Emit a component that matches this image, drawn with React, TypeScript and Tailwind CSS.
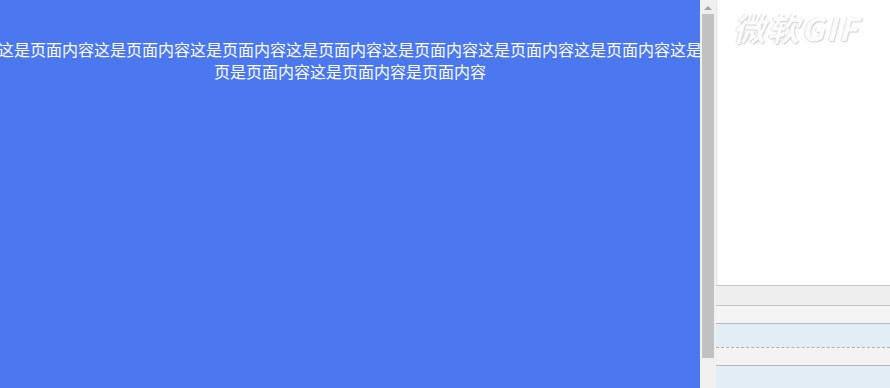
const line1 = "这是页面内容".repeat(7) + "这是";
const line2 = "页是页面内容这是页面内容是页面内容";

export default function App() {
  return (
    <div className="flex h-[388px] w-[890px] overflow-hidden bg-white font-['Noto_Sans_CJK_SC',sans-serif]">
      {/* page */}
      <div className="w-[700px] shrink-0 overflow-hidden bg-[#4b78ef] pt-[38px] text-center text-[16px] leading-[22px] text-white">
        <div className="-mx-[4px] whitespace-nowrap">{line1}</div>
        <div className="whitespace-nowrap">{line2}</div>
      </div>

      {/* scrollbar */}
      <div className="flex w-[16px] shrink-0 flex-col bg-[#f0f0f0]">
        <div className="flex h-[14px] items-center justify-center">
          <svg width="8" height="5" viewBox="0 0 8 5">
            <path d="M0 5 L4 1 L8 5 Z" fill="#a3a3a3" />
          </svg>
        </div>
        <div className="mx-[2px] h-[344px] bg-[#c1c1c1]" />
      </div>

      {/* side panel */}
      <div className="flex flex-1 flex-col shadow-[inset_3px_0_3px_-2px_rgba(0,0,0,0.12)]">
        <div className="h-[285px] pl-[17px] pt-[9px]">
          <span className="text-[32px] font-bold italic leading-9 tracking-[2px] text-[#fcfcfc] [text-shadow:1px_1px_1px_#cfcfcf,-1px_0_1px_#e0e0e0]">
            微软GIF
          </span>
        </div>
        <div className="h-[20px] border-t border-[#c4c4c4] bg-[#eeeeee]" />
        <div className="h-[18px] border-t border-[#c4c4c4] bg-[#f4f4f4]" />
        <div className="h-[24px] border-t border-[#b8b8b8] bg-[#e3edf6]" />
        <div className="h-[18px] border-t border-dashed border-[#b0b0b0] bg-[#f3f3f3]" />
        <div className="flex-1 border-t border-[#b8b8b8] bg-[#e3edf6]" />
      </div>
    </div>
  );
}
